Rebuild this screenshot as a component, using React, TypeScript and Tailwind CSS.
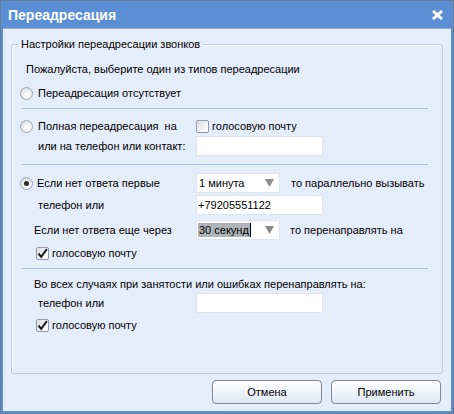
import React from "react";

const Radio = ({ checked = false }: { checked?: boolean }) => (
  <span className="w-[13px] h-[13px] rounded-full border border-[#9aa7b8] bg-[radial-gradient(circle_at_60%_65%,_#ffffff_0%,_#f2f2f2_40%,_#c9cdd2_100%)] flex items-center justify-center shrink-0">
    {checked && <span className="w-[5px] h-[5px] rounded-full bg-[#2a2a2a]" />}
  </span>
);

const Check = ({ checked = false }: { checked?: boolean }) => (
  <span className="w-[13px] h-[13px] rounded-[2px] border border-[#8e9aab] bg-[linear-gradient(135deg,_#d9dde3_0%,_#f7f7f7_70%,_#ffffff_100%)] flex items-center justify-center shrink-0">
    {checked && (
      <svg width="11" height="11" viewBox="0 0 11 11">
        <path d="M1.5 5.5 L4.2 8.8 L9.8 1.2" fill="none" stroke="#1c1c1c" strokeWidth="2" />
      </svg>
    )}
  </span>
);

const Select = ({ value, selected = false }: { value: string; selected?: boolean }) => (
  <div className="w-[84px] h-[20px] shrink-0 bg-white border border-[#dde5f0] flex items-center justify-between pl-[1px] pr-[5px]">
    <span className="flex items-center">
      <span className={selected ? "bg-[#b0b4ba] px-[1px]" : "px-[1px]"}>{value}</span>
      {selected && <span className="w-px h-[14px] bg-black" />}
    </span>
    <svg width="9" height="8" viewBox="0 0 9 8">
      <path d="M0 0 H9 L4.5 8 Z" fill="#8c8c8c" />
    </svg>
  </div>
);

const Input = ({ value = "" }: { value?: string }) => (
  <div className="w-[127px] h-[20px] shrink-0 bg-white border border-[#dde5f0] flex items-center px-[1px]">{value}</div>
);

const Sep = ({ mt }: { mt: string }) => <div className={`${mt} ml-[10px] mr-[14px] h-px bg-[#a9bfdd]`} />;

export default function App() {
  return (
    <div className="w-[454px] h-[414px] bg-[#5a8ed5] border border-[#6e7c90] flex flex-col text-[11px] leading-[14px] text-black whitespace-nowrap [font-family:'Liberation_Sans',Arial,sans-serif]">
      <div className="h-[27px] flex items-center justify-between pl-[7px] pr-[10px] text-white">
        <span className="font-bold text-[14px]">Переадресация</span>
        <svg width="11" height="10" viewBox="0 0 11 10">
          <path d="M1 1 L10 9 M10 1 L1 9" stroke="#ffffff" strokeWidth="3" />
        </svg>
      </div>
      <div className="flex-1 mx-[2px] mb-[2px] bg-[#e4edfa] border-t border-[#98a8bf] flex flex-col pt-[7px]">
        <fieldset className="mx-[8px] border border-[#bccbdd] rounded-[3px] pb-[39px] shadow-[inset_1px_1px_0_#ffffff]">
          <legend className="ml-[6px] px-[3px] leading-[16px]">Настройки переадресации звонков</legend>

          <div className="mt-[8px] h-[18px] flex items-center pl-[14px]">Пожалуйста, выберите один из типов переадресации</div>

          <div className="mt-[6px] h-[18px] flex items-center pl-[8px] gap-[5px]">
            <Radio />
            <span>Переадресация отсутствует</span>
          </div>

          <Sep mt="mt-[6px]" />

          <div className="mt-[8px] h-[18px] flex items-center pl-[8px]">
            <Radio />
            <span className="ml-[5px] w-[158px] shrink-0 whitespace-pre">Полная переадресация  на</span>
            <Check />
            <span className="ml-[3px]">голосовую почту</span>
          </div>
          <div className="mt-px h-[20px] flex items-center pl-[26px]">
            <span className="w-[158px] shrink-0">или на телефон или контакт:</span>
            <Input />
          </div>

          <Sep mt="mt-[8px]" />

          <div className="mt-[8px] h-[20px] flex items-center pl-[8px]">
            <Radio checked />
            <span className="ml-[4px] w-[159px] shrink-0">Если нет ответа первые</span>
            <Select value="1 минута" />
            <span className="ml-[11px]">то параллельно вызывать</span>
          </div>
          <div className="mt-[2px] h-[20px] flex items-center pl-[26px]">
            <span className="w-[158px] shrink-0">телефон или</span>
            <Input value="+79205551122" />
          </div>
          <div className="mt-[5px] h-[20px] flex items-center pl-[22px]">
            <span className="w-[162px] shrink-0">Если нет ответа еще через</span>
            <Select value="30 секунд" selected />
            <span className="ml-[10px]">то перенаправлять на</span>
          </div>
          <div className="mt-[4px] h-[18px] flex items-center pl-[24px] gap-[3px]">
            <Check checked />
            <span>голосовую почту</span>
          </div>

          <Sep mt="mt-[6px]" />

          <div className="mt-[6px] h-[18px] flex items-center pl-[22px]">Во всех случаях при занятости или ошибках перенаправлять на:</div>
          <div className="h-[20px] flex items-center pl-[26px]">
            <span className="w-[158px] shrink-0">телефон или</span>
            <Input />
          </div>
          <div className="mt-[3px] h-[18px] flex items-center pl-[24px] gap-[3px]">
            <Check checked />
            <span>голосовую почту</span>
          </div>
        </fieldset>

        <div className="mt-[6px] flex justify-end gap-[9px] pr-[10px]">
          <button className="w-[110px] h-[24px] rounded-[4px] border border-[#7d8898] bg-[linear-gradient(#ffffff,_#dfe8f5)]">Отмена</button>
          <button className="w-[110px] h-[24px] rounded-[4px] border border-[#7d8898] bg-[linear-gradient(#ffffff,_#dfe8f5)]">Применить</button>
        </div>
      </div>
    </div>
  );
}
